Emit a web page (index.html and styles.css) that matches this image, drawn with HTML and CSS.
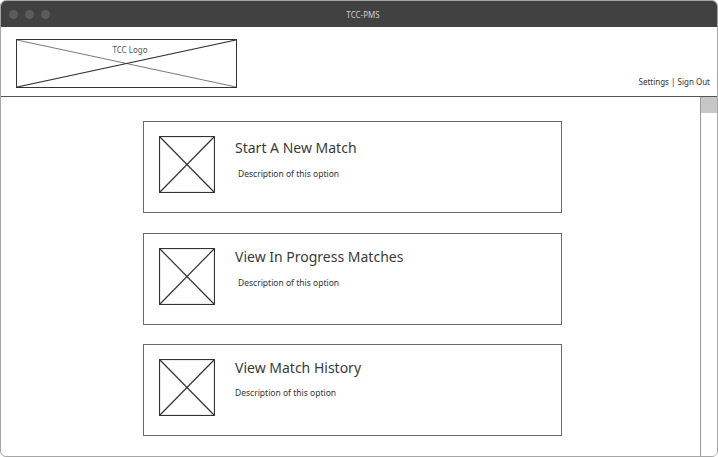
FILE: index.html
```html
<!DOCTYPE html>
<html lang="en">
<head>
<meta charset="utf-8">
<title>TCC-PMS</title>
<link rel="stylesheet" href="styles.css">
</head>
<body>
<div class="window">
  <div class="titlebar">
    <div class="dots"><span class="dot"></span><span class="dot"></span><span class="dot"></span></div>
    <div class="title">TCC-PMS</div>
    <div class="spacer"></div>
  </div>
  <header class="header">
    <div class="logo">
      <svg class="logo-x" viewBox="0 0 220 48" preserveAspectRatio="none" aria-hidden="true">
        <line x1="0" y1="0" x2="220" y2="48" stroke="#777" stroke-width="1"/>
        <line x1="0" y1="48" x2="220" y2="0" stroke="#333" stroke-width="1.2"/>
      </svg>
      <span class="logo-text">TCC Logo</span>
    </div>
    <nav class="account">Settings | Sign Out</nav>
  </header>
  <div class="body">
    <main class="main">
      <div class="card card-a">
        <svg class="thumb" viewBox="0 0 56 57" aria-hidden="true">
          <rect x="0.5" y="0.5" width="55" height="56" fill="#fff" stroke="#333" stroke-width="1.2"/>
          <line x1="0.5" y1="0.5" x2="55.5" y2="56.5" stroke="#333" stroke-width="1.2"/>
          <line x1="55.5" y1="0.5" x2="0.5" y2="56.5" stroke="#333" stroke-width="1.2"/>
        </svg>
        <div class="text">
          <div class="card-title">Start A New Match</div>
          <div class="card-desc indent">Description of this option</div>
        </div>
      </div>
      <div class="card">
        <svg class="thumb" viewBox="0 0 56 57" aria-hidden="true">
          <rect x="0.5" y="0.5" width="55" height="56" fill="#fff" stroke="#333" stroke-width="1.2"/>
          <line x1="0.5" y1="0.5" x2="55.5" y2="56.5" stroke="#333" stroke-width="1.2"/>
          <line x1="55.5" y1="0.5" x2="0.5" y2="56.5" stroke="#333" stroke-width="1.2"/>
        </svg>
        <div class="text">
          <div class="card-title">View In Progress Matches</div>
          <div class="card-desc indent">Description of this option</div>
        </div>
      </div>
      <div class="card card-c">
        <svg class="thumb" viewBox="0 0 56 57" aria-hidden="true">
          <rect x="0.5" y="0.5" width="55" height="56" fill="#fff" stroke="#333" stroke-width="1.2"/>
          <line x1="0.5" y1="0.5" x2="55.5" y2="56.5" stroke="#333" stroke-width="1.2"/>
          <line x1="55.5" y1="0.5" x2="0.5" y2="56.5" stroke="#333" stroke-width="1.2"/>
        </svg>
        <div class="text">
          <div class="card-title">View Match History</div>
          <div class="card-desc">Description of this option</div>
        </div>
      </div>
    </main>
    <div class="scrollbar"><div class="thumb-bar"></div></div>
  </div>
</div>
</body>
</html>
```
FILE: styles.css
```css
* { box-sizing: border-box; }
html, body { margin: 0; padding: 0; background: #fff; }
body {
  font-family: "Noto Sans", "Open Sans", sans-serif;
  color: #333;
}
.window {
  width: 718px;
  height: 457px;
  border: 1px solid #a6a6a6;
  border-radius: 6px;
  overflow: hidden;
  display: flex;
  flex-direction: column;
  background: #fff;
}
.titlebar {
  height: 26px;
  flex: none;
  background: #414141;
  display: grid;
  grid-template-columns: 1fr auto 1fr;
  align-items: center;
  padding: 0 0 0 8px;
}
.dots { display: flex; gap: 7px; }
.dot {
  width: 9px;
  height: 9px;
  border-radius: 50%;
  background: #5c5c5c;
}
.title {
  font-size: 8px;
  color: #cfcfcf;
}
.header {
  height: 70px;
  flex: none;
  border-bottom: 1px solid #555;
  display: flex;
  justify-content: space-between;
  align-items: flex-end;
  padding: 12px 7px 9px 15px;
}
.logo {
  position: relative;
  width: 221px;
  height: 49px;
  border: 1px solid #333;
  align-self: flex-start;
  display: flex;
  justify-content: center;
  padding-left: 7px;
}
.logo-x {
  position: absolute;
  inset: 0;
  width: 100%;
  height: 100%;
}
.logo-text {
  position: relative;
  font-size: 8px;
  line-height: 11px;
  color: #555;
  margin-top: 4px;
}
.account {
  font-size: 8px;
  color: #333;
  line-height: 11px;
}
.body {
  flex: 1;
  display: flex;
  min-height: 0;
}
.main {
  flex: 1;
  display: flex;
  flex-direction: column;
  gap: 19.5px;
  padding: 24px 0 0 142px;
}
.card {
  width: 419px;
  height: 92px;
  flex: none;
  border: 1px solid #6a6a6a;
  display: flex;
  align-items: flex-start;
  padding: 14px 0 0 15px;
}
.thumb {
  width: 56px;
  height: 57px;
  flex: none;
}
.text {
  margin-left: 20px;
  padding-top: 1px;
}
.card-a .text { padding-top: 4px; }
.card-title {
  font-size: 14px;
  line-height: 16px;
  color: #3a3a3a;
}
.card-desc {
  font-size: 8.5px;
  line-height: 12px;
  margin-top: 12px;
  color: #333;
}
.card-c .card-desc { margin-top: 11px; }
.card-desc.indent { margin-left: 3px; }
.scrollbar {
  width: 17px;
  flex: none;
  border-left: 1px solid #999;
  background: #fff;
}
.thumb-bar {
  height: 16px;
  background: #c6c6c6;
}
```
